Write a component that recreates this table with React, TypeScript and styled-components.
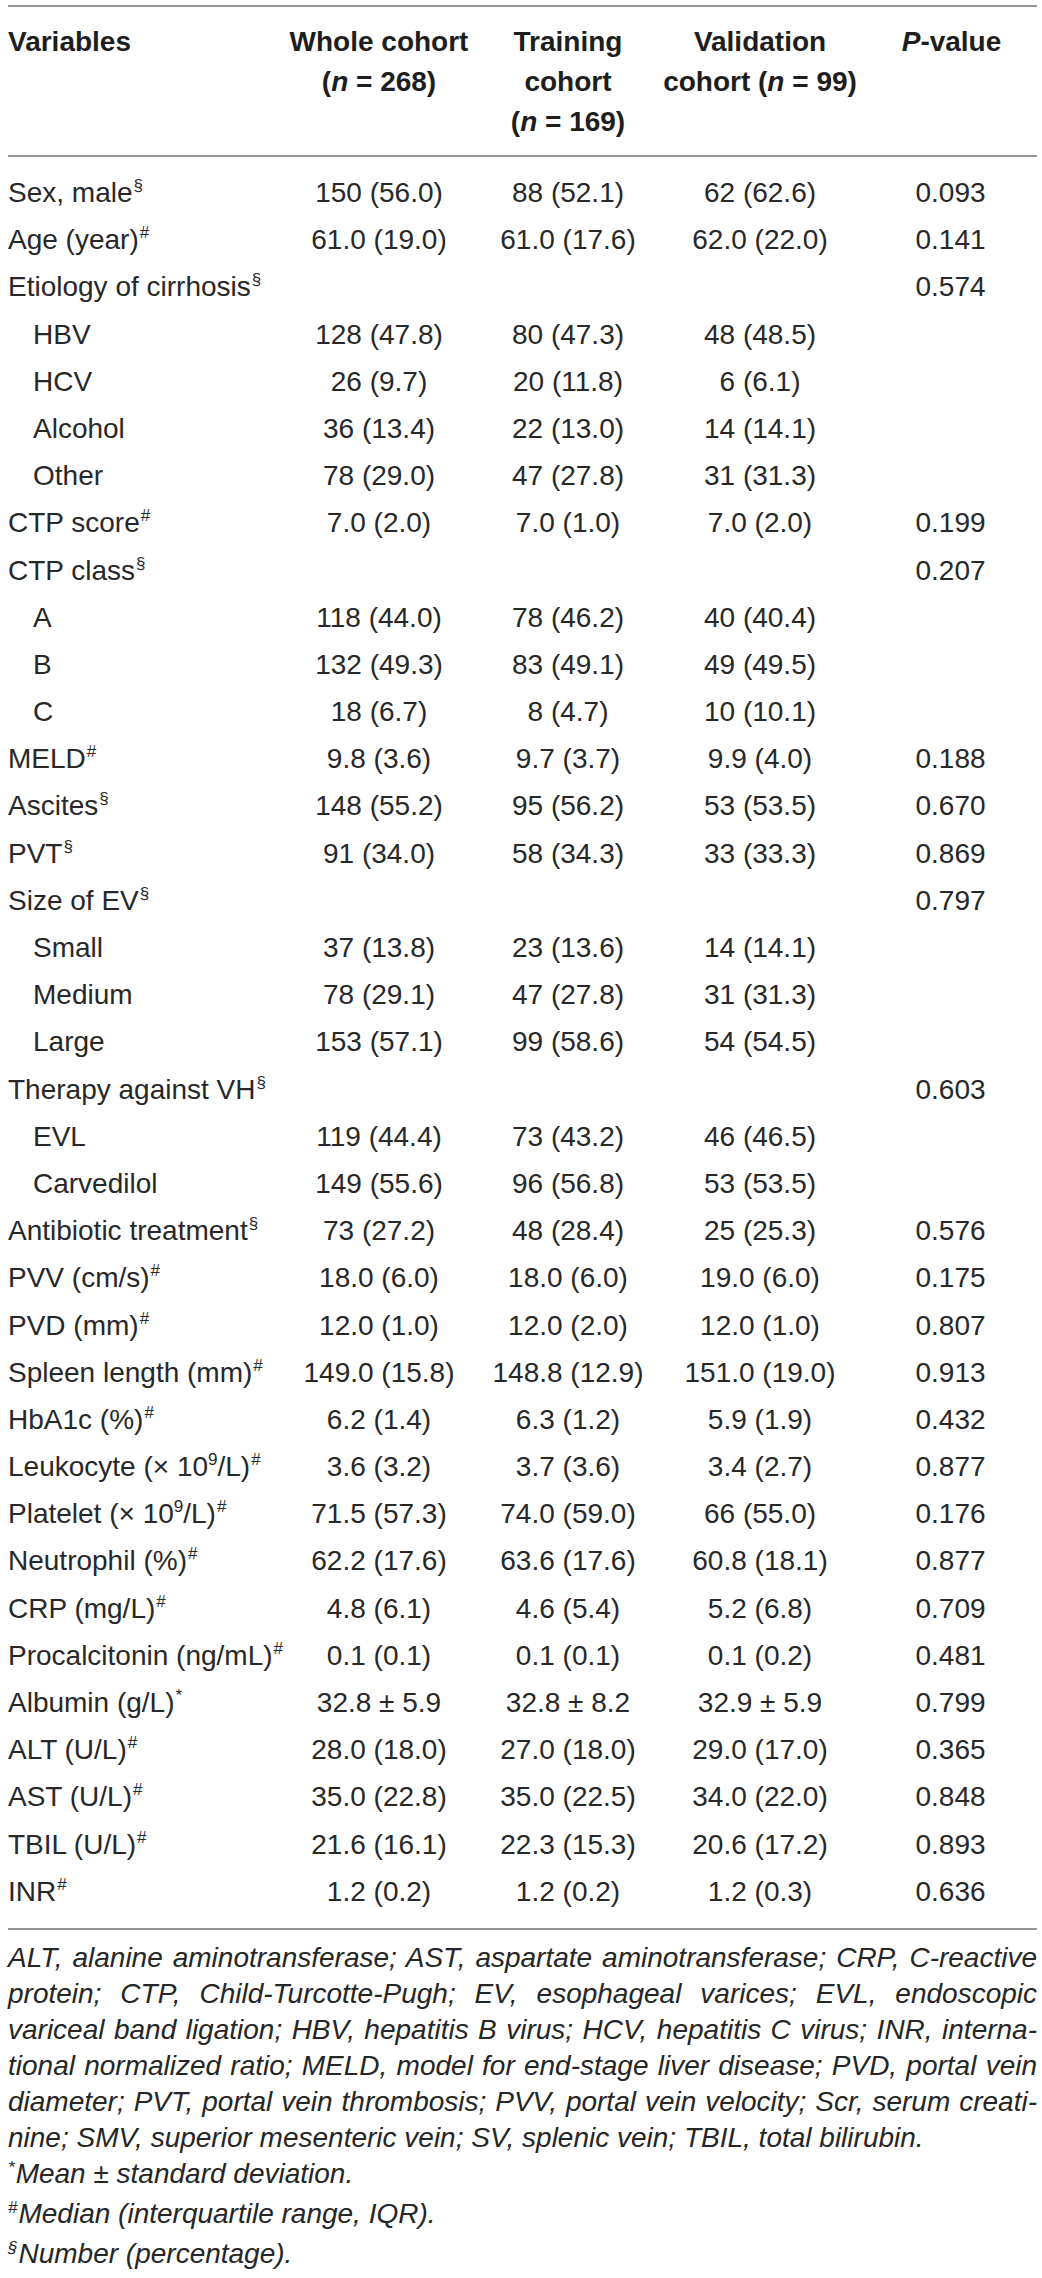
import React from "react";
import styled, { createGlobalStyle } from "styled-components";

const GlobalStyle = createGlobalStyle`
  html, body {
    margin: 0;
    padding: 0;
    background: #ffffff;
  }
  body {
    font-family: "Liberation Sans", Arial, Helvetica, sans-serif;
    color: #262626;
  }
`;

const Page = styled.div`
  width: 1042px;
  padding: 5px 5px 0 8px;
  box-sizing: border-box;
`;

const Table = styled.div`
  width: 1029px;
  border-top: 2px solid #959595;
  border-bottom: 2px solid #959595;
`;

const COLS = "276px 190px 188px 196px 1fr";

const HeadRow = styled.div`
  display: grid;
  grid-template-columns: ${COLS};
  padding: 15px 0 13px 0;
  border-bottom: 2px solid #959595;
`;

const HeadCell = styled.div<{ $left?: boolean; $shift?: number }>`
  font-weight: 700;
  font-size: 28px;
  line-height: 40px;
  color: #1e1e1e;
  text-align: ${(p) => (p.$left ? "left" : "center")};
  padding-left: ${(p) => p.$shift ?? 0}px;
  white-space: nowrap;
`;

const Line = styled.div``;

const Body = styled.div`
  padding: 12px 0 13px 0;
`;

const Row = styled.div`
  display: grid;
  grid-template-columns: ${COLS};
  height: 47.2px;
`;

const Cell = styled.div<{ $left?: boolean; $indent?: boolean; $shift?: number }>`
  display: flex;
  align-items: center;
  justify-content: ${(p) => (p.$left ? "flex-start" : "center")};
  padding-left: ${(p) => (p.$indent ? 25 : p.$shift ?? 0)}px;
  font-size: 28px;
  line-height: 47.2px;
  white-space: nowrap;
  color: #282828;
`;

const Sup = styled.sup`
  font-size: 17px;
  line-height: 0;
  vertical-align: 0;
  position: relative;
  top: -11px;
  margin-left: 1px;
`;

const NumSup = styled.sup`
  font-size: 17px;
  line-height: 0;
  vertical-align: 0;
  position: relative;
  top: -11px;
`;

const Notes = styled.div`
  width: 1029px;
  padding-top: 10px;
  font-style: italic;
  font-size: 28px;
  line-height: 36px;
  color: #262626;
`;

const NoteLine = styled.div<{ $justify?: boolean }>`
  white-space: nowrap;
  text-align: ${(p) => (p.$justify ? "justify" : "left")};
  text-align-last: ${(p) => (p.$justify ? "justify" : "left")};
`;

const NoteSup = styled.span`
  font-size: 17px;
  position: relative;
  top: -10px;
  margin-right: 1px;
`;

const It = styled.i`
  font-style: italic;
`;

type RowData = {
  label: React.ReactNode;
  sup?: string;
  indent?: boolean;
  v?: [string, string, string];
  p?: string;
};

const tenNine = (
  <>
    × 10<NumSup>9</NumSup>/L
  </>
);

const rows: RowData[] = [
  { label: "Sex, male", sup: "§", v: ["150 (56.0)", "88 (52.1)", "62 (62.6)"], p: "0.093" },
  { label: "Age (year)", sup: "#", v: ["61.0 (19.0)", "61.0 (17.6)", "62.0 (22.0)"], p: "0.141" },
  { label: "Etiology of cirrhosis", sup: "§", p: "0.574" },
  { label: "HBV", indent: true, v: ["128 (47.8)", "80 (47.3)", "48 (48.5)"] },
  { label: "HCV", indent: true, v: ["26 (9.7)", "20 (11.8)", "6 (6.1)"] },
  { label: "Alcohol", indent: true, v: ["36 (13.4)", "22 (13.0)", "14 (14.1)"] },
  { label: "Other", indent: true, v: ["78 (29.0)", "47 (27.8)", "31 (31.3)"] },
  { label: "CTP score", sup: "#", v: ["7.0 (2.0)", "7.0 (1.0)", "7.0 (2.0)"], p: "0.199" },
  { label: "CTP class", sup: "§", p: "0.207" },
  { label: "A", indent: true, v: ["118 (44.0)", "78 (46.2)", "40 (40.4)"] },
  { label: "B", indent: true, v: ["132 (49.3)", "83 (49.1)", "49 (49.5)"] },
  { label: "C", indent: true, v: ["18 (6.7)", "8 (4.7)", "10 (10.1)"] },
  { label: "MELD", sup: "#", v: ["9.8 (3.6)", "9.7 (3.7)", "9.9 (4.0)"], p: "0.188" },
  { label: "Ascites", sup: "§", v: ["148 (55.2)", "95 (56.2)", "53 (53.5)"], p: "0.670" },
  { label: "PVT", sup: "§", v: ["91 (34.0)", "58 (34.3)", "33 (33.3)"], p: "0.869" },
  { label: "Size of EV", sup: "§", p: "0.797" },
  { label: "Small", indent: true, v: ["37 (13.8)", "23 (13.6)", "14 (14.1)"] },
  { label: "Medium", indent: true, v: ["78 (29.1)", "47 (27.8)", "31 (31.3)"] },
  { label: "Large", indent: true, v: ["153 (57.1)", "99 (58.6)", "54 (54.5)"] },
  { label: "Therapy against VH", sup: "§", p: "0.603" },
  { label: "EVL", indent: true, v: ["119 (44.4)", "73 (43.2)", "46 (46.5)"] },
  { label: "Carvedilol", indent: true, v: ["149 (55.6)", "96 (56.8)", "53 (53.5)"] },
  { label: "Antibiotic treatment", sup: "§", v: ["73 (27.2)", "48 (28.4)", "25 (25.3)"], p: "0.576" },
  { label: "PVV (cm/s)", sup: "#", v: ["18.0 (6.0)", "18.0 (6.0)", "19.0 (6.0)"], p: "0.175" },
  { label: "PVD (mm)", sup: "#", v: ["12.0 (1.0)", "12.0 (2.0)", "12.0 (1.0)"], p: "0.807" },
  { label: "Spleen length (mm)", sup: "#", v: ["149.0 (15.8)", "148.8 (12.9)", "151.0 (19.0)"], p: "0.913" },
  { label: "HbA1c (%)", sup: "#", v: ["6.2 (1.4)", "6.3 (1.2)", "5.9 (1.9)"], p: "0.432" },
  { label: <>Leukocyte ({tenNine})</>, sup: "#", v: ["3.6 (3.2)", "3.7 (3.6)", "3.4 (2.7)"], p: "0.877" },
  { label: <>Platelet ({tenNine})</>, sup: "#", v: ["71.5 (57.3)", "74.0 (59.0)", "66 (55.0)"], p: "0.176" },
  { label: "Neutrophil (%)", sup: "#", v: ["62.2 (17.6)", "63.6 (17.6)", "60.8 (18.1)"], p: "0.877" },
  { label: "CRP (mg/L)", sup: "#", v: ["4.8 (6.1)", "4.6 (5.4)", "5.2 (6.8)"], p: "0.709" },
  { label: "Procalcitonin (ng/mL)", sup: "#", v: ["0.1 (0.1)", "0.1 (0.1)", "0.1 (0.2)"], p: "0.481" },
  { label: "Albumin (g/L)", sup: "*", v: ["32.8 ± 5.9", "32.8 ± 8.2", "32.9 ± 5.9"], p: "0.799" },
  { label: "ALT (U/L)", sup: "#", v: ["28.0 (18.0)", "27.0 (18.0)", "29.0 (17.0)"], p: "0.365" },
  { label: "AST (U/L)", sup: "#", v: ["35.0 (22.8)", "35.0 (22.5)", "34.0 (22.0)"], p: "0.848" },
  { label: "TBIL (U/L)", sup: "#", v: ["21.6 (16.1)", "22.3 (15.3)", "20.6 (17.2)"], p: "0.893" },
  { label: "INR", sup: "#", v: ["1.2 (0.2)", "1.2 (0.2)", "1.2 (0.3)"], p: "0.636" },
];

const noteLines = [
  "ALT, alanine aminotransferase; AST, aspartate aminotransferase; CRP, C-reactive",
  "protein; CTP, Child-Turcotte-Pugh; EV, esophageal varices; EVL, endoscopic",
  "variceal band ligation; HBV, hepatitis B virus; HCV, hepatitis C virus; INR, interna-",
  "tional normalized ratio; MELD, model for end-stage liver disease; PVD, portal vein",
  "diameter; PVT, portal vein thrombosis; PVV, portal vein velocity; Scr, serum creati-",
];

export default function App() {
  return (
    <>
      <GlobalStyle />
      <Page>
        <Table>
          <HeadRow>
            <HeadCell $left>
              <Line>Variables</Line>
            </HeadCell>
            <HeadCell>
              <Line>Whole cohort</Line>
              <Line>
                (<It>n</It> = 268)
              </Line>
            </HeadCell>
            <HeadCell>
              <Line>Training</Line>
              <Line>cohort</Line>
              <Line>
                (<It>n</It> = 169)
              </Line>
            </HeadCell>
            <HeadCell>
              <Line>Validation</Line>
              <Line>
                cohort (<It>n</It> = 99)
              </Line>
            </HeadCell>
            <HeadCell $shift={8}>
              <Line>
                <It>P</It>-value
              </Line>
            </HeadCell>
          </HeadRow>
          <Body>
            {rows.map((r, i) => (
              <Row key={i}>
                <Cell $left $indent={r.indent}>
                  <span>
                    {r.label}
                    {r.sup && <Sup>{r.sup}</Sup>}
                  </span>
                </Cell>
                <Cell>{r.v?.[0] ?? ""}</Cell>
                <Cell>{r.v?.[1] ?? ""}</Cell>
                <Cell>{r.v?.[2] ?? ""}</Cell>
                <Cell $shift={6}>{r.p ?? ""}</Cell>
              </Row>
            ))}
          </Body>
        </Table>
        <Notes>
          {noteLines.map((l, i) => (
            <NoteLine key={i} $justify>
              {l}
            </NoteLine>
          ))}
          <NoteLine>nine; SMV, superior mesenteric vein; SV, splenic vein; TBIL, total bilirubin.</NoteLine>
          <NoteLine>
            <NoteSup>*</NoteSup>Mean ± standard deviation.
          </NoteLine>
          <NoteLine>
            <NoteSup>#</NoteSup>Median (interquartile range, IQR).
          </NoteLine>
          <NoteLine>
            <NoteSup>§</NoteSup>Number (percentage).
          </NoteLine>
        </Notes>
      </Page>
    </>
  );
}
